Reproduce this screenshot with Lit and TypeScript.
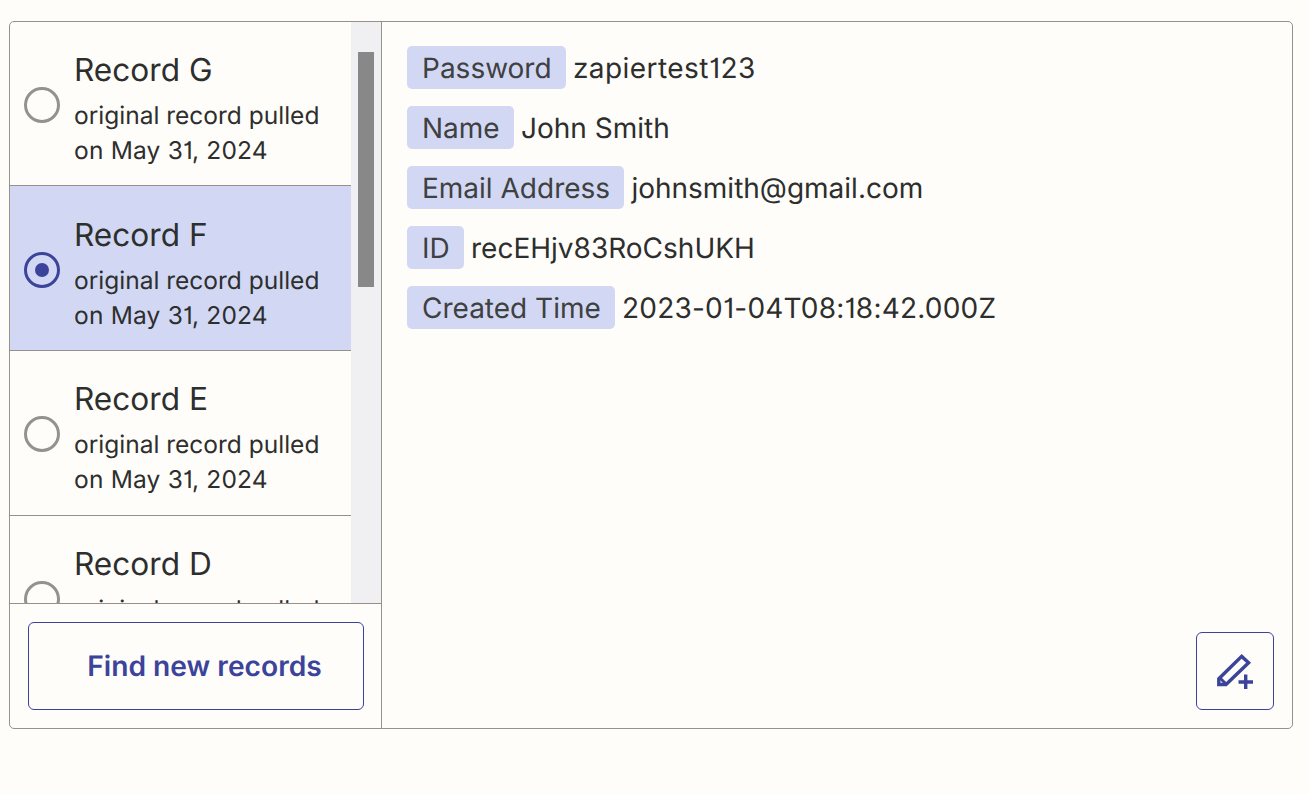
import { LitElement, css, html, svg } from 'lit';
import { customElement } from 'lit/decorators.js';

const records = [
  { name: 'Record G', selected: false },
  { name: 'Record F', selected: true },
  { name: 'Record E', selected: false },
  { name: 'Record D', selected: false },
];

const fields = [
  { label: 'Password', value: 'zapiertest123', tracking: 0.45 },
  { label: 'Name', value: 'John Smith', tracking: 0 },
  { label: 'Email Address', value: 'johnsmith@gmail.com', tracking: 0 },
  { label: 'ID', value: 'recEHjv83RoCshUKH', tracking: 0 },
  { label: 'Created Time', value: '2023-01-04T08:18:42.000Z', tracking: 0.2 },
];

const pencilPlus = svg`
  <path d="M1.800 31.500V25.800L24.700 3.400l6.900 6.400L9 31.500H1.800Z" fill="none" stroke="currentColor" stroke-width="3.400" />
  <path d="M3 25l6.500 6.500" fill="none" stroke="currentColor" stroke-width="3" />
  <path d="M28.700 21.500v15M21.500 29h14.500" fill="none" stroke="currentColor" stroke-width="3.400" />
`;

@customElement('app-root')
export class AppRoot extends LitElement {
  render() {
    return html`
      <div class="panel">
        <div class="side">
          <div class="scroller">
            <div class="list">
              ${records.map(
                (r) => html`
                  <div class="item ${r.selected ? 'selected' : ''}">
                    <span class="radio"></span>
                    <div class="text">
                      <div class="title">${r.name}</div>
                      <div class="sub">
                        original record pulled <span class="date">on May 31, 2024</span>
                      </div>
                    </div>
                  </div>
                `,
              )}
            </div>
            <div class="track"><div class="thumb"></div></div>
          </div>
          <div class="footer">
            <button class="find">Find new records</button>
          </div>
        </div>
        <div class="detail">
          <div class="fields">
            ${fields.map(
              (f) => html`
                <div class="field">
                  <span class="chip">${f.label}</span>
                  <span style="letter-spacing: ${f.tracking}px">${f.value}</span>
                </div>
              `,
            )}
          </div>
          <button class="edit">
            <svg width="36" height="36" viewBox="0 0 36 36">${pencilPlus}</svg>
          </button>
        </div>
      </div>
    `;
  }

  static styles = css`
    :host {
      display: block;
      box-sizing: border-box;
      height: 794px;
      padding: 21px 16px 0 9px;
      background: #fffdf9;
      font-family: Inter, sans-serif;
      color: #2d2e2e;
      text-rendering: geometricPrecision;
      font-feature-settings: 'cv01';
    }
    * {
      box-sizing: border-box;
    }
    .panel {
      display: flex;
      height: 708px;
      border: 1px solid #95928e;
      border-radius: 5px;
      overflow: hidden;
    }
    .side {
      display: flex;
      flex-direction: column;
      width: 372px;
      flex: none;
      border-right: 1px solid #95928e;
    }
    .scroller {
      display: flex;
      height: 581px;
      overflow: hidden;
    }
    .list {
      flex: 1;
      min-width: 0;
    }
    .item {
      display: flex;
      align-items: center;
      gap: 14px;
      height: 165px;
      padding: 2px 20px 0 14px;
      border-bottom: 1px solid #95928e;
    }
    .item:first-child {
      height: 164px;
    }
    .item.selected {
      padding-top: 3px;
      background: #d2d8f3;
    }
    .radio {
      flex: none;
      display: flex;
      align-items: center;
      justify-content: center;
      width: 36px;
      height: 36px;
      border: 3px solid #95928e;
      border-radius: 50%;
    }
    .selected .radio {
      border-color: #3b439a;
    }
    .selected .radio::after {
      content: '';
      width: 14px;
      height: 14px;
      border-radius: 50%;
      background: #3b439a;
    }
    .text {
      min-width: 0;
      margin-top: 8px;
    }
    .selected .text {
      margin-top: 9px;
    }
    .title {
      font-size: 31.6px;
      line-height: 40px;
      margin-bottom: 8px;
    }
    .sub {
      font-size: 24.5px;
      line-height: 35px;
    }
    .date {
      letter-spacing: 0.2px;
    }
    .track {
      flex: none;
      width: 30px;
      padding: 30px 7px 0;
      background: #f0f0f2;
    }
    .thumb {
      height: 235px;
      background: #888;
    }
    .footer {
      flex: 1;
      padding: 18px 17px 18px 18px;
      border-top: 1px solid #95928e;
    }
    button {
      font-family: inherit;
      text-rendering: inherit;
      background: transparent;
      border: 1px solid #3b439a;
      border-radius: 6px;
      color: #3b439a;
      padding: 0;
    }
    .find {
      display: block;
      width: 100%;
      height: 88px;
      padding-left: 17px;
      font-size: 28.2px;
      font-weight: 600;
    }
    .detail {
      flex: 1;
      display: flex;
      flex-direction: column;
      min-width: 0;
      padding: 24px 18px 18px 25px;
    }
    .fields {
      flex: 1;
      display: flex;
      flex-direction: column;
      gap: 17px;
    }
    .field {
      display: flex;
      align-items: center;
      gap: 7px;
      height: 43px;
      font-size: 28px;
    }
    .chip {
      height: 43px;
      line-height: 45px;
      padding: 0 14.3px 0 15px;
      border-radius: 5px;
      background: #d2d8f3;
      color: #3f4041;
    }
    .edit {
      align-self: flex-end;
      display: flex;
      align-items: center;
      justify-content: center;
      width: 78px;
      height: 78px;
    }
  `;
}

declare global {
  interface HTMLElementTagNameMap {
    'app-root': AppRoot;
  }
}
